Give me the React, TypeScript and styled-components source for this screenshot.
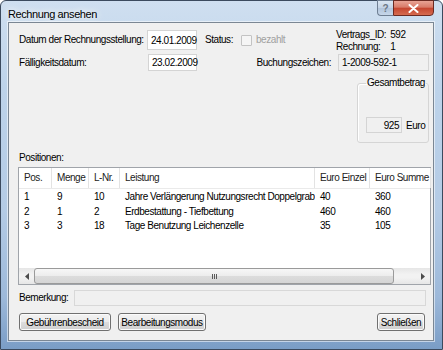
import React from 'react';
import styled, { createGlobalStyle } from 'styled-components';

const GlobalStyle = createGlobalStyle`
  html, body {
    margin: 0;
    padding: 0;
    background: #ffffff;
  }
  body {
    font-family: "Liberation Sans", Arial, sans-serif;
    font-size: 10px;
    letter-spacing: -0.45px;
    color: #000;
  }
  * {
    box-sizing: border-box;
  }
`;

interface Position {
  pos: string;
  menge: string;
  lnr: string;
  leistung: string;
  einzel: string;
  summe: string;
}

const positions: Position[] = [
  { pos: '1', menge: '9', lnr: '10', leistung: 'Jahre Verlängerung Nutzungsrecht Doppelgrab', einzel: '40', summe: '360' },
  { pos: '2', menge: '1', lnr: '2', leistung: 'Erdbestattung - Tiefbettung', einzel: '460', summe: '460' },
  { pos: '3', menge: '3', lnr: '18', leistung: 'Tage Benutzung Leichenzelle', einzel: '35', summe: '105' },
];

const columns = [
  { key: 'pos', title: 'Pos.', width: 33 },
  { key: 'menge', title: 'Menge', width: 37 },
  { key: 'lnr', title: 'L-Nr.', width: 31 },
  { key: 'leistung', title: 'Leistung', width: 195 },
  { key: 'einzel', title: 'Euro Einzel', width: 55 },
  { key: 'summe', title: 'Euro Summe', width: 61 },
] as const;

const App = () => {
  return (
    <>
      <GlobalStyle />
      <Frame>
        <TitleBar>
          <Title>Rechnung ansehen</Title>
          <CaptionButtons>
            <HelpButton>?</HelpButton>
            <CloseButton>
              <svg width="11" height="9" viewBox="0 0 11 9">
                <path d="M1.5 1 L9.5 8 M9.5 1 L1.5 8" stroke="#ffffff" strokeWidth="2" strokeLinecap="round" />
              </svg>
            </CloseButton>
          </CaptionButtons>
        </TitleBar>

        <Client>
          <Row>
            <FieldLabel width={129}>Datum der Rechnungsstellung:</FieldLabel>
            <TextBox width={50} height={20}>24.01.2009</TextBox>
            <StatusLabel>Status:</StatusLabel>
            <CheckBox />
            <DisabledText>bezahlt</DisabledText>
            <ContractInfo>
              <span>Vertrags_ID:</span>
              <span>592</span>
              <span>Rechnung:</span>
              <span>1</span>
            </ContractInfo>
          </Row>

          <Row2>
            <FieldLabel width={130}>Fälligkeitsdatum:</FieldLabel>
            <TextBox width={49} height={17}>23.02.2009</TextBox>
            <BookingLabel>Buchungszeichen:</BookingLabel>
            <TextBox width={91} height={17} readOnly>1-2009-592-1</TextBox>
          </Row2>

          <GroupRow>
            <GroupBox>
              <GroupLegend>Gesamtbetrag</GroupLegend>
              <AmountRow>
                <AmountBox>925</AmountBox>
                <span>Euro</span>
              </AmountRow>
            </GroupBox>
          </GroupRow>

          <SectionLabel>Positionen:</SectionLabel>

          <ListView>
            <HeaderRow>
              {columns.map((c) => (
                <HeaderCell key={c.key} width={c.width}>
                  {c.title}
                </HeaderCell>
              ))}
            </HeaderRow>
            <ListBody>
              {positions.map((p) => (
                <ListRow key={p.pos}>
                  {columns.map((c) => (
                    <ListCell key={c.key} width={c.width}>
                      {p[c.key]}
                    </ListCell>
                  ))}
                </ListRow>
              ))}
            </ListBody>
            <ScrollBar>
              <ScrollArrow>
                <svg width="4" height="7" viewBox="0 0 4 7">
                  <path d="M4 0 L0 3.5 L4 7 Z" fill="#4d4d4d" />
                </svg>
              </ScrollArrow>
              <ScrollTrack>
                <ScrollThumb>
                  <Grip>
                    <i />
                    <i />
                    <i />
                  </Grip>
                </ScrollThumb>
              </ScrollTrack>
              <ScrollArrow>
                <svg width="4" height="7" viewBox="0 0 4 7">
                  <path d="M0 0 L4 3.5 L0 7 Z" fill="#4d4d4d" />
                </svg>
              </ScrollArrow>
            </ScrollBar>
          </ListView>

          <RemarkRow>
            <FieldLabel width={56}>Bemerkung:</FieldLabel>
            <RemarkBox />
          </RemarkRow>

          <ButtonRow>
            <Button width={92}>Gebührenbescheid</Button>
            <Button width={88}>Bearbeitungsmodus</Button>
            <Spacer />
            <Button width={48}>Schließen</Button>
          </ButtonRow>
        </Client>
      </Frame>
    </>
  );
};

const Frame = styled.div`
  width: 443px;
  height: 350px;
  display: flex;
  flex-direction: column;
  padding: 0 8px 8px 7px;
  border: 1px solid #3b4a5e;
  border-radius: 6px 6px 0 0;
  background: linear-gradient(
    to bottom,
    #cfdff0 0%,
    #bdd3ea 25%,
    #b4cbe5 60%,
    #9db9da 85%,
    #7a9dc6 100%
  );
`;

const TitleBar = styled.div`
  height: 21px;
  display: flex;
  justify-content: space-between;
  align-items: flex-start;
`;

const Title = styled.div`
  margin-top: 6px;
  font-size: 11px;
  letter-spacing: -0.4px;
  line-height: 14px;
  color: #000;
  text-shadow: 0 0 6px #ffffff, 0 0 10px #ffffff;
`;

const CaptionButtons = styled.div`
  display: flex;
  margin-top: -1px;
`;

const HelpButton = styled.div`
  width: 16px;
  height: 16px;
  display: flex;
  align-items: center;
  justify-content: center;
  font-size: 10px;
  font-weight: bold;
  letter-spacing: 0;
  color: #6d7886;
  border: 1px solid #6f7f93;
  border-right: none;
  border-radius: 0 0 0 4px;
  background: linear-gradient(to bottom, #dbe6f2 0%, #c3d3e5 50%, #b1c4db 51%, #c7d7ea 100%);
`;

const CloseButton = styled.div`
  width: 41px;
  height: 16px;
  display: flex;
  align-items: center;
  justify-content: center;
  border: 1px solid #6b2a22;
  border-radius: 0 0 4px 0;
  background: linear-gradient(to bottom, #e8a395 0%, #d87a68 45%, #c5452f 50%, #d56b50 100%);
`;

const Client = styled.div`
  flex: 1;
  display: flex;
  flex-direction: column;
  padding: 7px 4px 8px 9px;
  background: #f0f0f0;
  border: 1px solid #7b8794;
  box-shadow: 0 0 0 1px rgba(255, 255, 255, 0.55);
`;

const Row = styled.div`
  display: flex;
  align-items: flex-start;
  height: 20px;
`;

const Row2 = styled.div`
  display: flex;
  align-items: center;
  height: 17px;
  margin-top: 4px;
`;

const FieldLabel = styled.div<{ width: number }>`
  width: ${({ width }) => width}px;
  padding-left: 1px;
  line-height: 20px;
  white-space: nowrap;
  flex-shrink: 0;
`;

const TextBox = styled.div<{ width: number; height: number; readOnly?: boolean }>`
  width: ${({ width }) => width}px;
  height: ${({ height }) => height}px;
  flex-shrink: 0;
  display: flex;
  align-items: center;
  padding-left: 3px;
  background: ${({ readOnly }) => (readOnly ? '#f0f0f0' : '#ffffff')};
  border: 1px solid #d4d4d4;
  white-space: nowrap;
`;

const StatusLabel = styled.div`
  margin-left: 8px;
  width: 36px;
  line-height: 20px;
`;

const CheckBox = styled.div`
  width: 11px;
  height: 11px;
  margin-top: 5px;
  margin-right: 4px;
  border: 1px solid #c3c3c3;
  border-radius: 1px;
  background: #f5f5f5;
`;

const DisabledText = styled.div`
  line-height: 20px;
  color: #a0a0a0;
`;

const ContractInfo = styled.div`
  margin-left: auto;
  width: 93px;
  margin-top: -1px;
  display: grid;
  grid-template-columns: auto 1fr;
  column-gap: 4px;
  line-height: 12px;
`;

const BookingLabel = styled.div`
  margin-left: auto;
  margin-right: 7px;
  line-height: 17px;
`;

const GroupRow = styled.div`
  display: flex;
  justify-content: flex-end;
  margin-top: 6px;
`;

const GroupBox = styled.fieldset`
  width: 72px;
  margin: 0;
  padding: 0 0 9px 8px;
  border: 1px solid #d5d5d5;
  border-radius: 3px;
  box-shadow: inset 1px 1px 0 #ffffff;
`;

const GroupLegend = styled.legend`
  padding: 0 1px;
  margin-left: 0;
  line-height: 12px;
`;

const AmountRow = styled.div`
  display: flex;
  align-items: center;
  gap: 4px;
  margin-top: 28px;
`;

const AmountBox = styled.div`
  width: 36px;
  height: 16px;
  padding-right: 2px;
  display: flex;
  align-items: center;
  justify-content: flex-end;
  background: #f0f0f0;
  border: 1px solid #d4d4d4;
`;

const SectionLabel = styled.div`
  margin-top: 8px;
  padding-left: 1px;
  line-height: 13px;
`;

const ListView = styled.div`
  margin-top: 3px;
  width: 413px;
  height: 118px;
  display: flex;
  flex-direction: column;
  background: #ffffff;
  border: 1px solid #a0a4aa;
`;

const HeaderRow = styled.div`
  display: flex;
  height: 21px;
  border-bottom: 1px solid #eaeaea;
`;

const HeaderCell = styled.div<{ width: number }>`
  width: ${({ width }) => width}px;
  flex-shrink: 0;
  padding-left: 5px;
  line-height: 20px;
  color: #222;
  border-right: 1px solid #e3e3e3;
  white-space: nowrap;
  overflow: hidden;
`;

const ListBody = styled.div`
  flex: 1;
  padding-top: 1px;
`;

const ListRow = styled.div`
  display: flex;
  height: 14.5px;
  line-height: 14px;
`;

const ListCell = styled.div<{ width: number }>`
  width: ${({ width }) => width}px;
  flex-shrink: 0;
  padding-left: 5px;
  white-space: nowrap;
  overflow: hidden;
`;

const ScrollBar = styled.div`
  height: 16px;
  display: flex;
  align-items: stretch;
  background: linear-gradient(to bottom, #e6e6e6, #f2f2f2 40%, #f2f2f2 60%, #e6e6e6);
`;

const ScrollArrow = styled.div`
  width: 15px;
  display: flex;
  align-items: center;
  justify-content: center;
  flex-shrink: 0;
`;

const ScrollTrack = styled.div`
  flex: 1;
  display: flex;
  align-items: stretch;
`;

const ScrollThumb = styled.div`
  width: 360px;
  display: flex;
  align-items: center;
  justify-content: center;
  border: 1px solid #9a9a9a;
  border-radius: 3px;
  background: linear-gradient(to bottom, #f7f7f7 0%, #ececec 50%, #dcdcdc 51%, #d5d5d5 100%);
`;

const Grip = styled.div`
  display: flex;
  gap: 1px;

  i {
    width: 1px;
    height: 5px;
    background: #5a5a5a;
  }
`;

const RemarkRow = styled.div`
  display: flex;
  align-items: center;
  margin-top: 5px;
  height: 16px;
`;

const RemarkBox = styled.div`
  width: 352px;
  height: 16px;
  background: #f0f0f0;
  border: 1px solid #d8d8d8;
`;

const ButtonRow = styled.div`
  display: flex;
  gap: 7px;
  margin-top: 7px;
  padding-left: 1px;
  padding-right: 4px;
`;

const Spacer = styled.div`
  flex: 1;
`;

const Button = styled.div<{ width: number }>`
  width: ${({ width }) => width}px;
  height: 18px;
  display: flex;
  align-items: center;
  justify-content: center;
  border: 1px solid #707070;
  border-radius: 3px;
  white-space: nowrap;
  box-shadow: inset 0 0 0 1px #fbfbfb;
  background: linear-gradient(to bottom, #f2f2f2 0%, #ebebeb 50%, #dddddd 51%, #cfcfcf 100%);
`;

export default App;
